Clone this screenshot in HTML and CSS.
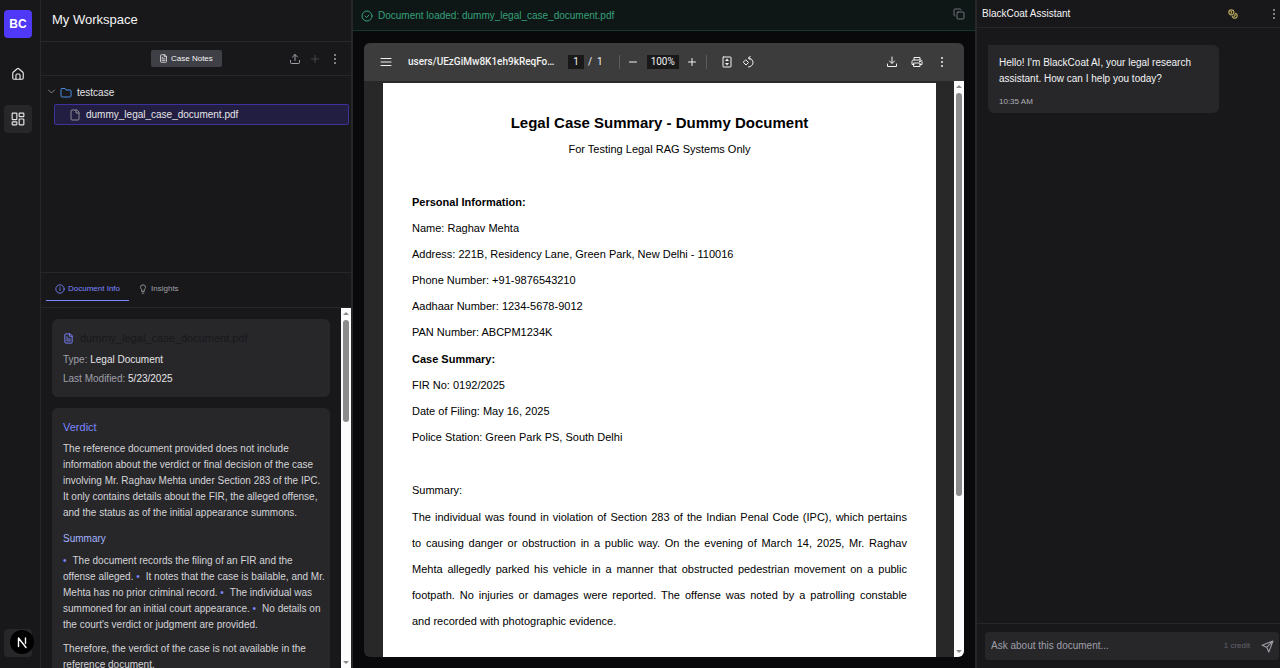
FILE: index.html
```html
<!DOCTYPE html>
<html lang="en">
<head>
<meta charset="utf-8">
<title>BlackCoat AI</title>
<link rel="stylesheet" href="styles.css">
</head>
<body>
<div class="app">
  <nav class="rail" aria-label="Main">
    <a class="brand" href="#">BC</a>
    <a class="rail-link" href="#" aria-label="Home">
      <svg class="icon-14" viewBox="0 0 24 24"><path d="M3 10.5a2 2 0 0 1 .7-1.6l7-6a2 2 0 0 1 2.6 0l7 6a2 2 0 0 1 .7 1.6V19a2 2 0 0 1-2 2H5a2 2 0 0 1-2-2z"/><path d="M8.500 21v-7a2 2 0 0 1 2-2h3a2 2 0 0 1 2 2v7"/></svg>
    </a>
    <a class="rail-link rail-active" href="#" aria-label="Workspace">
      <svg class="icon-14" viewBox="0 0 24 24"><rect x="2" y="2" width="8" height="11" rx="1"/><rect x="14" y="2" width="8" height="6" rx="1"/><rect x="14" y="12" width="8" height="10" rx="1"/><rect x="2" y="17" width="8" height="5" rx="1"/></svg>
    </a>
    <div class="account">
      <button class="dev-badge" aria-label="Open developer tools">
        <svg viewBox="0 0 24 24"><path d="M8.500 16.500V8l7.500 9.500M15.500 8v5.500"/></svg>
      </button>
    </div>
  </nav>

  <aside class="workspace">
    <header class="workspace-head"><h1>My Workspace</h1></header>
    <div class="notes-bar">
      <button class="notes-btn">
        <svg class="icon-9" viewBox="0 0 24 24"><path d="M15 2H6a2 2 0 0 0-2 2v16a2 2 0 0 0 2 2h12a2 2 0 0 0 2-2V7z"/><path d="M14 2v5h6M8 9h2M8 13h8M8 17h8"/></svg>
        Case Notes
      </button>
      <div class="notes-tools">
        <button aria-label="Upload"><svg class="icon-12" viewBox="0 0 24 24"><path d="M3 15v4a2 2 0 0 0 2 2h14a2 2 0 0 0 2-2v-4M7 8l5-5 5 5M12 3v12"/></svg></button>
        <button class="dim" aria-label="Add"><svg class="icon-12" viewBox="0 0 24 24"><path d="M5 12h14M12 5v14"/></svg></button>
        <button aria-label="More"><svg class="icon-12 dots" viewBox="0 0 24 24"><circle cx="12" cy="4" r="2"/><circle cx="12" cy="12" r="2"/><circle cx="12" cy="20" r="2"/></svg></button>
      </div>
    </div>
    <div class="tree">
      <button class="folder">
        <svg class="icon-9 chevron" viewBox="0 0 24 24"><path d="M4 8l8 8 8-8"/></svg>
        <svg class="icon-12 folder-icon" viewBox="0 0 24 24"><path d="M20 20a2 2 0 0 0 2-2V8a2 2 0 0 0-2-2h-8L10 3H4a2 2 0 0 0-2 2v13a2 2 0 0 0 2 2z"/></svg>
        testcase
      </button>
      <button class="file">
        <svg class="icon-12" viewBox="0 0 24 24"><path d="M15 2H6a2 2 0 0 0-2 2v16a2 2 0 0 0 2 2h12a2 2 0 0 0 2-2V7z"/><path d="M14 2v6h6"/></svg>
        dummy_legal_case_document.pdf
      </button>
    </div>
    <div class="tabs" role="tablist">
      <button class="tab tab-active" role="tab" aria-selected="true">
        <svg class="icon-10" viewBox="0 0 24 24"><circle cx="12" cy="12" r="10"/><path d="M12 16v-5M12 8v-1"/></svg>
        Document Info
      </button>
      <button class="tab" role="tab" aria-selected="false">
        <svg class="icon-10" viewBox="0 0 24 24"><path d="M15 14c.2-1 .7-1.700 1.500-2.500A5.500 5.500 0 0 0 18 8 6 6 0 0 0 6 8c0 1 .2 2.200 1.500 3.500.7.7 1.300 1.500 1.500 2.500M9 15v3h6v-3M10 22h4"/></svg>
        Insights
      </button>
    </div>
    <div class="details">
      <div class="cards">
        <section class="card meta">
          <h2><svg class="icon-11" viewBox="0 0 24 24"><path d="M15 2H6a2 2 0 0 0-2 2v16a2 2 0 0 0 2 2h12a2 2 0 0 0 2-2V7z"/><path d="M14 2v5h6M8 9h2M8 13h8M8 17h8"/></svg>dummy_legal_case_document.pdf</h2>
          <p>Type: <b>Legal Document</b></p>
          <p>Last Modified: <b>5/23/2025</b></p>
        </section>
        <section class="card verdict">
          <h2>Verdict</h2>
          <p>The reference document provided does not include<br>information about the verdict or final decision of the case<br>involving Mr. Raghav Mehta under Section 283 of the IPC.<br>It only contains details about the FIR, the alleged offense,<br>and the status as of the initial appearance summons.</p>
          <h3>Summary</h3>
          <p><i>•</i>The document records the filing of an FIR and the<br>offense alleged. <i>•</i>It notes that the case is bailable, and Mr.<br>Mehta has no prior criminal record. <i>•</i>The individual was<br>summoned for an initial court appearance. <i>•</i>No details on<br>the court's verdict or judgment are provided.</p>
          <p>Therefore, the verdict of the case is not available in the<br>reference document.</p>
        </section>
      </div>
      <div class="scrollbar" aria-hidden="true"><span class="arrow-up"></span><span class="thumb thumb-short"></span><span class="arrow-down"></span></div>
    </div>
  </aside>

  <main class="viewer">
    <div class="status">
      <svg class="icon-12" viewBox="0 0 24 24"><circle cx="12" cy="12" r="10"/><path d="M8 12l3 3 5-5"/></svg>
      <span>Document loaded: dummy_legal_case_document.pdf</span>
      <button aria-label="Copy"><svg class="icon-12" viewBox="0 0 24 24"><rect x="8" y="8" width="14" height="14" rx="2"/><path d="M4 16a2 2 0 0 1-2-2V4a2 2 0 0 1 2-2h10a2 2 0 0 1 2 2"/></svg></button>
    </div>
    <div class="stage">
      <div class="pdf">
        <div class="toolbar">
          <button aria-label="Menu"><svg class="icon-12" viewBox="0 0 24 24"><path d="M2 5h20M2 12h20M2 19h20"/></svg></button>
          <span class="doc-name">users/UEzGiMw8K1eh9kReqFo…</span>
          <input class="page-no" type="text" value="1" aria-label="Page number">
          <span class="page-total">/&nbsp; 1</span>
          <span class="rule"></span>
          <button class="zoom-out" aria-label="Zoom out"><svg class="icon-12" viewBox="0 0 24 24"><path d="M5 12h14"/></svg></button>
          <input class="zoom-level" type="text" value="100%" aria-label="Zoom level">
          <button class="zoom-in" aria-label="Zoom in"><svg class="icon-12" viewBox="0 0 24 24"><path d="M5 12h14M12 5v14"/></svg></button>
          <span class="rule"></span>
          <button class="fit" aria-label="Fit to page"><svg class="icon-12" viewBox="0 0 24 24"><rect x="4" y="2" width="16" height="20" rx="1"/><path class="solid" d="M12 5l4 5H8zM12 19l4-5H8z"/></svg></button>
          <button class="rotate" aria-label="Rotate"><svg class="icon-12" viewBox="0 0 24 24"><path d="M6 8l5 5-5 5-5-5zM11 4a9 9 0 1 1 0 18M15 0l-4 4 4 4"/></svg></button>
          <div class="toolbar-end">
            <button aria-label="Download"><svg class="icon-12" viewBox="0 0 24 24"><path d="M12 2v12M7 10l5 5 5-5M3 16v5h18v-5"/></svg></button>
            <button aria-label="Print"><svg class="icon-12" viewBox="0 0 24 24"><path d="M6 8V3h12v5M6 17H2v-6a3 3 0 0 1 3-3h14a3 3 0 0 1 3 3v6h-4"/><rect x="6" y="14" width="12" height="7"/><path d="M17 11h2"/></svg></button>
            <button aria-label="More"><svg class="icon-12 dots" viewBox="0 0 24 24"><circle cx="12" cy="4" r="2"/><circle cx="12" cy="12" r="2"/><circle cx="12" cy="20" r="2"/></svg></button>
          </div>
        </div>
        <div class="pdf-body">
          <article class="sheet">
            <h1>Legal Case Summary - Dummy Document</h1>
            <p class="subtitle">For Testing Legal RAG Systems Only</p>
            <h2 class="spaced">Personal Information:</h2>
            <p>Name: Raghav Mehta</p>
            <p>Address: 221B, Residency Lane, Green Park, New Delhi - 110016</p>
            <p>Phone Number: +91-9876543210</p>
            <p>Aadhaar Number: 1234-5678-9012</p>
            <p>PAN Number: ABCPM1234K</p>
            <h2>Case Summary:</h2>
            <p>FIR No: 0192/2025</p>
            <p>Date of Filing: May 16, 2025</p>
            <p>Police Station: Green Park PS, South Delhi</p>
            <p class="spaced">Summary:</p>
            <p class="justified">The individual was found in violation of Section 283 of the Indian Penal Code (IPC), which pertains<br>to causing danger or obstruction in a public way. On the evening of March 14, 2025, Mr. Raghav<br>Mehta allegedly parked his vehicle in a manner that obstructed pedestrian movement on a public<br>footpath. No injuries or damages were reported. The offense was noted by a patrolling constable</p>
            <p>and recorded with photographic evidence.</p>
          </article>
          <div class="scrollbar" aria-hidden="true"><span class="arrow-up"></span><span class="thumb thumb-long"></span><span class="arrow-down"></span></div>
        </div>
      </div>
    </div>
  </main>

  <aside class="assistant">
    <header class="assistant-head">
      <h2>BlackCoat Assistant</h2>
      <button class="credits" aria-label="Credits"><svg class="icon-10" viewBox="0 0 24 24"><circle cx="8" cy="8" r="6"/><path d="M18 10.400A6 6 0 1 1 10.300 18M7 6h1v4M16.700 13.900l.7.7-2.800 2.800"/></svg></button>
      <button aria-label="More"><svg class="icon-12 dots" viewBox="0 0 24 24"><circle cx="12" cy="4" r="2"/><circle cx="12" cy="12" r="2"/><circle cx="12" cy="20" r="2"/></svg></button>
    </header>
    <div class="chat">
      <div class="message">
        <p>Hello! I'm BlackCoat AI, your legal research<br>assistant. How can I help you today?</p>
        <time>10:35 AM</time>
      </div>
    </div>
    <form class="composer">
      <div class="ask">
        <input type="text" placeholder="Ask about this document..." aria-label="Ask about this document">
        <span>1 credit</span>
        <button type="button" aria-label="Send"><svg class="icon-13" viewBox="0 0 24 24"><path d="M22 2L2 9.500l8.500 4L14.500 22zM22 2L10.500 13.500"/></svg></button>
      </div>
    </form>
  </aside>
</div>
</body>
</html>
```
FILE: styles.css
```css
* { box-sizing: border-box; }
body {
  margin: 0;
  background: #09090b;
  color: #e4e4e7;
  font: 10px/16px "Liberation Sans", Arial, sans-serif;
}
h1, h2, h3, p { margin: 0; font-weight: 400; }
button, input {
  border: 0;
  padding: 0;
  margin: 0;
  background: none;
  color: inherit;
  font: inherit;
  min-width: 0;
}
button { display: flex; align-items: center; cursor: pointer; white-space: nowrap; }
svg {
  display: block;
  flex: none;
  fill: none;
  stroke: currentColor;
  stroke-width: 2;
  stroke-linecap: round;
  stroke-linejoin: round;
}
.dots, .solid { fill: currentColor; stroke: none; }
.icon-9 { width: 9px; height: 9px; }
.icon-10 { width: 10px; height: 10px; }
.icon-11 { width: 11px; height: 11px; }
.icon-12 { width: 12px; height: 12px; }
.icon-13 { width: 13px; height: 13px; }
.icon-14 { width: 14px; height: 14px; }

.app {
  display: grid;
  grid-template-columns: 41px 312px minmax(0, 1fr) 305px;
  height: 100vh;
  overflow: hidden;
}

/* Navigation rail */
.rail {
  display: flex;
  flex-direction: column;
  align-items: flex-start;
  gap: 17px;
  padding: 10px 4px 11px;
  background: #18181b;
  border-right: 1px solid #27272a;
}
.brand, .rail-link, .account {
  display: flex;
  align-items: center;
  justify-content: center;
  width: 28px;
  height: 28px;
  border-radius: 4px;
  color: #e4e4e7;
  text-decoration: none;
}
.brand {
  margin-bottom: 5px;
  background: #4f39f6;
  color: #fff;
  font-size: 12px;
  font-weight: 700;
}
.rail-active { background: #27272a; }
.account { position: relative; margin-top: auto; background: #27272a; }
.dev-badge {
  position: absolute;
  left: 6px;
  top: 1px;
  width: 24px;
  height: 24px;
  border-radius: 50%;
  background: #000;
  color: #fff;
}
.dev-badge svg { width: 24px; height: 24px; stroke-width: 1.4; }

/* Workspace panel */
.workspace {
  display: flex;
  flex-direction: column;
  min-height: 0;
  background: #18181b;
  border-right: 2px solid #27272a;
}
.workspace-head { padding: 10px 11px 11px; border-bottom: 1px solid #27272a; }
.workspace-head h1 { font-size: 13px; line-height: 20px; color: #f4f4f5; }
.notes-bar {
  display: grid;
  grid-template-columns: 110px auto 1fr;
  align-items: center;
  padding: 8px 10px 8px 0;
  border-bottom: 1px solid #27272a;
}
.notes-btn {
  grid-column: 2;
  gap: 3px;
  height: 17px;
  padding: 0 9px 0 8px;
  border-radius: 2px;
  background: #3f3f46;
  color: #f4f4f5;
  font-size: 8px;
}
.notes-tools { display: flex; justify-content: flex-end; gap: 8px; color: #a1a1aa; }
.dim { opacity: .35; }
.tree { flex: 0 0 196px; padding: 6px 2px 0 6px; }
.folder { gap: 4px; height: 21px; margin-bottom: 1px; color: #e4e4e7; }
.chevron { color: #a1a1aa; margin-bottom: 3px; }
.folder-icon { color: #4a90e2; margin-right: 1px; }
.file {
  gap: 5px;
  width: 295px;
  max-width: 100%;
  height: 21px;
  margin-left: 7px;
  padding-left: 14px;
  border: 1px solid #3b329b;
  border-radius: 2px;
  background: #211e42;
  color: #e4e4e7;
}
.file svg { color: #8b8b95; }
.tabs {
  display: flex;
  padding: 4px 5px 6px;
  border-top: 1px solid #27272a;
  border-bottom: 1px solid #27272a;
}
.tab {
  gap: 3px;
  height: 24px;
  padding: 0 9px;
  border-bottom: 1px solid transparent;
  color: #a1a1aa;
  font-size: 8px;
}
.tab-active { border-color: #7c86ff; color: #7c86ff; }
.details { display: flex; flex: 1; min-height: 0; }
.cards { flex: 1; min-width: 0; padding: 11px 11px 0; overflow: hidden; }
.card {
  padding: 11px;
  border-radius: 6px;
  background: #27272a;
  white-space: nowrap;
}
.meta { margin-bottom: 11px; padding-bottom: 9px; color: #9f9fa9; line-height: 19px; }
.meta h2 {
  display: flex;
  align-items: center;
  gap: 6px;
  color: #18181b;
  font-size: 11px;
  line-height: 16px;
  margin-bottom: 4px;
}
.meta h2 svg { color: #7c86ff; }
.meta b { color: #e4e4e7; font-weight: 400; }
.verdict { color: #d4d4d8; }
.verdict h2 { margin-bottom: 6px; color: #7c86ff; font-size: 11px; }
.verdict h3 { margin: 10px 0 6px; color: #a3b3ff; font-size: 10px; }
.verdict p + p { margin-top: 8px; }
.verdict i { margin-right: 6px; color: #7c86ff; font-style: normal; }

/* Scrollbars */
.scrollbar {
  display: flex;
  flex: none;
  flex-direction: column;
  align-items: center;
  width: 10px;
  padding: 4px 0;
  background: #fcfcfc;
}
.arrow-up, .arrow-down { border: 3px solid transparent; }
.arrow-up { border-top: 0; border-bottom-color: #8b8b8b; }
.arrow-down { margin-top: auto; border-bottom: 0; border-top-color: #8b8b8b; }
.thumb { width: 6px; margin-top: 5px; border-radius: 3px; background: #8b8b8b; }
.thumb-short { flex: 0 0 29%; }
.thumb-long { flex: 0 0 71%; }

/* Document viewer */
.viewer { display: flex; flex-direction: column; min-width: 0; min-height: 0; }
.status {
  display: flex;
  align-items: center;
  gap: 5px;
  height: 31px;
  padding: 1px 10px 0 8px;
  border-bottom: 1px solid #12392f;
  background: #0e1716;
  color: #36a07a;
}
.status button { margin: 0 0 4px auto; color: #71717b; }
.stage { flex: 1; min-height: 0; padding: 12px 11px 11px; }
.pdf {
  display: flex;
  flex-direction: column;
  height: 100%;
  overflow: hidden;
  border-radius: 6px;
  background: #282828;
}
.toolbar {
  display: flex;
  flex: none;
  align-items: center;
  height: 38px;
  padding: 0 16px;
  background: #3c3c3c;
  color: #f1f1f1;
  font-family: Roboto, sans-serif;
}
.doc-name { width: 144px; margin: 0 16px; font-weight: 500; white-space: nowrap; }
.page-no, .zoom-level {
  height: 14px;
  background: #191919;
  text-align: center;
}
.page-no { width: 16px; }
.page-total { margin: 0 16px 0 4px; white-space: nowrap; }
.rule { width: 1px; height: 14px; background: #5c5c5c; }
.zoom-out { margin: 0 8px 0 7px; }
.zoom-level { width: 32px; }
.zoom-in { margin: 0 8px 0 7px; }
.fit { margin: 0 10px 0 14px; }
.toolbar-end { display: flex; gap: 13px; margin-left: auto; }
.pdf-body { display: flex; flex: 1; min-height: 0; }
.sheet {
  flex: 1;
  margin: 2px 18px 0 19px;
  padding: 27px 29px 0;
  overflow: hidden;
  background: #fff;
  color: #000;
  font-size: 11px;
  line-height: 26px;
}
.sheet h1 { font-size: 15px; font-weight: 700; text-align: center; }
.sheet h2 { margin-top: 1px; font-size: 11px; font-weight: 700; }
.sheet .subtitle { text-align: center; }
.sheet .spaced { margin-top: 27px; }
.sheet .justified { margin-top: 1px; text-align: justify; text-align-last: justify; }

/* Assistant panel */
.assistant {
  display: flex;
  flex-direction: column;
  min-width: 0;
  border-left: 2px solid #27272a;
  background: #18181b;
}
.assistant-head {
  display: flex;
  align-items: center;
  height: 28px;
  padding-left: 5px;
  border-bottom: 1px solid #27272a;
  color: #a1a1aa;
}
.assistant-head h2 { color: #f4f4f5; font-size: 10px; }
.credits { margin: 0 30px 0 auto; color: #b5a45a; }
.credits svg { stroke-width: 3; }
.chat { flex: 1; padding: 17px 11px; }
.message {
  width: 231px;
  padding: 10px 11px 3px;
  border-radius: 0 6px 6px 6px;
  background: #27272a;
  color: #f4f4f5;
}
.message time { display: block; margin-top: 7px; color: #b0b0b8; font-size: 8px; }
.composer { padding: 8px 1px 8px 8px; border-top: 1px solid #27272a; }
.ask {
  display: flex;
  align-items: center;
  height: 28px;
  padding: 0 5px 0 6px;
  border-radius: 4px;
  background: #27272a;
  color: #9f9fa9;
}
.ask input { flex: 1; outline: 0; }
.ask input::placeholder { color: #9f9fa9; opacity: 1; }
.ask span { margin-right: 11px; color: #62626b; font-size: 8px; }
```
